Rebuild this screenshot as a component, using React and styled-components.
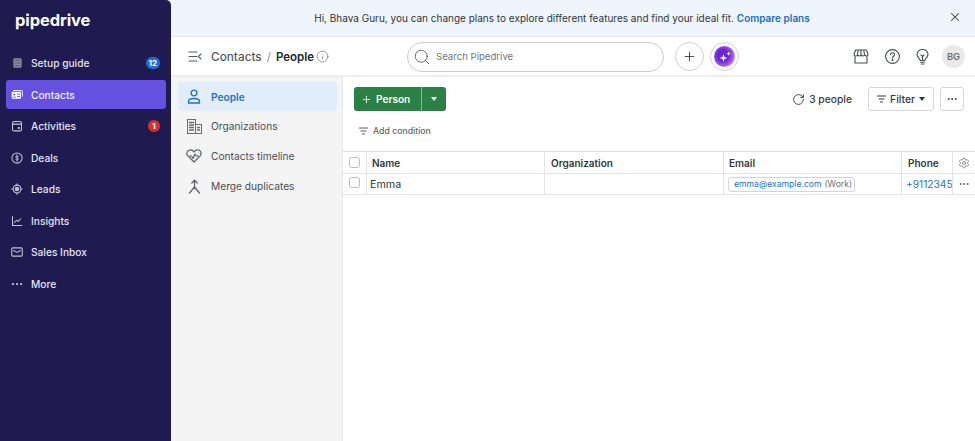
import React from 'react';
import styled, { createGlobalStyle } from 'styled-components';
import { X, Plus, Search, RotateCw, Settings, Ellipsis, Info } from 'lucide-react';

const Global = createGlobalStyle`
  html, body { margin: 0; padding: 0; height: 100%; background: #fff; overflow: hidden; }
  body { font-family: Inter, "Noto Sans", sans-serif; color: #2b2f36; }
  * { box-sizing: border-box; }
`;

const Page = styled.div`display: flex; width: 975px; height: 441px; overflow: hidden; background: #fff;`;
const Sidebar = styled.aside`
  width: 171px; flex: none; background: #1f1b50; border-top-right-radius: 5px;
  display: flex; flex-direction: column; padding: 0 5px 0 6px;
`;
const Logo = styled.div`
  height: 47.5px; padding: 5px 0 0 9px; color: #fff; font-size: 16.5px; font-weight: 700; letter-spacing: -0.1px; line-height: 30px;
`;
const SideItem = styled.div`
  height: ${p => p.$active ? 29 : 31.5}px; margin: ${p => p.$active ? '1.25px 0' : 0}; display: flex; align-items: center;
  padding-left: 5px; border-radius: 3px; font-size: 10.2px; font-weight: 500; color: ${p => p.$active ? '#f1f0fb' : '#e4e3f1'};
  background: ${p => p.$active ? '#6550e0' : 'transparent'};
`;
const SideIcon = styled.span`width: 12px; margin-right: 8px; display: flex; align-items: center; justify-content: center; color: #c4c3d8;`;
const SideBadge = styled.span`
  margin-left: auto; margin-right: 6px; height: 12px; min-width: 12px; padding: 0 3px; border-radius: 6px; background: ${p => p.$color};
  color: #fff; font-size: 8px; font-weight: 700; display: flex; align-items: center; justify-content: center;
`;
const Main = styled.div`flex: 1; min-width: 0; display: flex; flex-direction: column;`;
const Banner = styled.div`
  height: 37px; flex: none; background: #eff5fd; border-bottom: 1px solid #e3e6ea; display: flex; align-items: center; justify-content: center;
  font-size: 10px; color: #2f343b; position: relative; padding-right: 22px; padding-bottom: 1px;
`;
const BannerLink = styled.a`color: #1a6fc4; font-weight: 600; margin-left: 3px;`;
const BannerClose = styled.span`position: absolute; right: 13px; top: 10px; display: flex; color: #3b4047;`;
const TopBar = styled.header`height: 40px; flex: none; display: flex; align-items: center; border-bottom: 2px solid #eeeeef; padding-left: 17px; padding-top: 1px;`;
const Crumbs = styled.div`display: flex; align-items: center; margin-left: 9px; width: 196px; font-size: 11.8px; font-weight: 500; color: #565b63;`;
const Slash = styled.span`margin: 0 5px; color: #8b8f96; font-weight: 400;`;
const Current = styled.span`color: #22262c; font-size: 11.5px; font-weight: 600; margin-right: 2px;`;
const SearchBox = styled.div`
  width: 257px; height: 30px; border: 1px solid #c9ccd0; border-radius: 15px; display: flex; align-items: center; padding-left: 5px; gap: 5px;
  font-size: 9.6px; color: #71757c;
`;
const RoundBtn = styled.div`
  width: 29px; height: 29px; border-radius: 50%; border: 1px solid #d0d2d6; display: flex; align-items: center; justify-content: center;
  margin-left: ${p => p.$ml || 0}px; color: #33373d;
`;
const Ai = styled.div`
  width: 21px; height: 21px; border-radius: 50%; background: radial-gradient(circle at 42% 45%, #6a25d8 0 34%, #a55ad8 60%, #f3c1cc 86%, #fdf0ee 100%);
  display: flex; align-items: center; justify-content: center;
`;
const TopIcons = styled.div`margin-left: auto; display: flex; align-items: center; padding-right: 10px; color: #4a4e55;`;
const TopIcon = styled.span`display: flex; margin-right: ${p => p.$mr}px;`;
const Avatar = styled.div`width: 23px; height: 23px; border-radius: 50%; background: #e9e9ea; color: #6c7076; font-size: 9.4px; font-weight: 600; display: flex; align-items: center; justify-content: center;`;
const Body = styled.div`flex: 1; display: flex; min-height: 0;`;
const SubNav = styled.nav`width: 172px; flex: none; background: #f4f4f5; border-right: 1px solid #e4e4e6; padding: 5px 5px 0 7px;`;
const SubItem = styled.div`
  height: ${p => p.$first ? 29 : 30}px; display: flex; align-items: center; border-radius: 3px; font-size: 10.2px; padding-left: 7px;
  color: ${p => p.$active ? '#1f72c9' : '#494d54'}; font-weight: ${p => p.$active ? 600 : 400}; background: ${p => p.$active ? '#e1edfb' : 'transparent'};
`;
const SubIcon = styled.span`width: 18px; margin-right: 8px; display: flex; justify-content: center; color: ${p => p.$active ? '#1f72c9' : '#5c6066'};`;
const Content = styled.section`flex: 1; min-width: 0; display: flex; flex-direction: column;`;
const Toolbar = styled.div`height: 44px; flex: none; display: flex; align-items: center; padding: 0 11px;`;
const SplitButton = styled.div`display: flex; height: 24px; border-radius: 3px; overflow: hidden; background: #2a8045; color: #fff; font-size: 10.1px; font-weight: 600;`;
const AddPart = styled.div`width: 68px; display: flex; align-items: center; padding-left: 7px; gap: 4px; border-right: 1px solid #8ab79a;`;
const CaretPart = styled.div`width: 24px; display: flex; align-items: center; justify-content: center;`;
const Caret = styled.span`width: 0; height: 0; border-left: 3.5px solid transparent; border-right: 3.5px solid transparent; border-top: 4px solid ${p => p.$c || '#fff'};`;
const Count = styled.div`margin-left: auto; display: flex; align-items: center; gap: 4px; font-size: 10.3px; font-weight: 500; color: #3a3e45; margin-right: 16px;`;
const OutlineBtn = styled.div`
  height: 24px; border: 1px solid #d4d6d9; border-radius: 3px; display: flex; align-items: center; justify-content: center; font-size: 10.3px; font-weight: 500; color: #33373d;
  width: ${p => p.$w}px; margin-left: ${p => p.$ml || 0}px; gap: 4px;
`;
const Condition = styled.div`height: 20px; flex: none; display: flex; align-items: center; gap: 5px; padding-left: 16px; font-size: 8.7px; font-weight: 500; color: #62666d;`;
const Table = styled.div`position: relative; border-top: 1px solid #d9dadc; margin-top: 10px; font-size: 10px;`;
const Row = styled.div`display: grid; grid-template-columns: 24px 178px 179px 178px 51px; height: ${p => p.$h}px; border-bottom: 1px solid #e2e3e5;`;
const Cell = styled.div`
  display: flex; align-items: center; overflow: hidden; white-space: nowrap; border-right: 1px solid #e2e3e5;
  padding-left: ${p => p.$pl ?? 5}px; color: #33373d; font-weight: ${p => p.$head ? 600 : 400}; font-size: ${p => p.$fs || 10}px;
`;
const LastHead = styled(Cell)`border-right: 0;`;
const PhoneCell = styled(Cell)`border-right: 0; color: #1f72c9; font-size: 10.2px;`;
const Check = styled.span`width: 11px; height: 11px; border: 1px solid #b9bcc0; border-radius: 2.5px; background: #fff; display: block; margin-top: ${p => p.$mt || 0}px;`;
const EmailChip = styled.span`
  height: 15px; border: 1px solid #d3d5d8; border-radius: 3px; display: inline-flex; align-items: center; padding: 0 2px 0 5px; font-size: 8.6px; color: #1f72c9; gap: 3px;
`;
const ChipType = styled.span`color: #6b6f76;`;
const Floating = styled.div`
  position: absolute; right: 0; top: ${p => p.$top}px; width: 23px; height: ${p => p.$h}px; background: #fff; border-left: 1px solid #e2e3e5; border-bottom: 1px solid #e2e3e5;
  display: flex; align-items: center; justify-content: center; color: #55595f;
`;

const s = { width: 12, height: 12, viewBox: '0 0 16 16', fill: 'none', stroke: 'currentColor', strokeWidth: 1.4, strokeLinecap: 'round', strokeLinejoin: 'round' };
const SetupI = () => <svg {...s} width="11" height="14"><rect x="2" y="1" width="12" height="14" rx="2" fill="#8d8ba6" stroke="none"/><path d="M4.5 4h3M9 4h2.5M4.5 8h3M9 8h2.5M4.5 12h3M9 12h2.5" stroke="#4a4770" strokeWidth="1.3"/></svg>;
const ContactsI = () => <svg width="13" height="11" viewBox="0 0 18 15" fill="none" strokeLinecap="round"><path d="M4 1.5h12a1 1 0 0 1 1 1V10" stroke="#fff" strokeWidth="1.3"/><rect x="1" y="3.5" width="14" height="10.5" rx="1.5" fill="#fff"/><circle cx="5" cy="7.5" r="1.5" fill="#6550e0"/><path d="M2.8 12c.3-1.5 4-1.5 4.4 0M9.5 7h3.5M9.5 10.5h3.5" stroke="#6550e0" strokeWidth="1.3"/></svg>;
const ActivI = () => <svg {...s}><rect x="2" y="2" width="12" height="12.5" rx="2"/><path d="M2 5.5h12"/><rect x="9" y="9.5" width="3" height="2.3" fill="currentColor" stroke="none"/></svg>;
const DealI = () => <svg {...s}><circle cx="8" cy="8" r="6.8"/><path d="M10 5.8c-.5-.8-3.8-1.2-3.9.6-.1 1.9 3.9 1.1 3.9 3 0 1.8-3.4 1.5-4 .5M8 3.8v8.4" strokeWidth="1.1"/></svg>;
const LeadI = () => <svg {...s}><circle cx="8" cy="8" r="5.2"/><circle cx="8" cy="8" r="2.4" fill="currentColor"/><path d="M8 1v1.6M8 13.4V15M1 8h1.6M13.4 8H15"/></svg>;
const InsightI = () => <svg {...s}><path d="M2 2v12h12.5"/><path d="M4.5 10l3-3 2 1.5 3.5-3.5"/></svg>;
const InboxI = () => <svg {...s}><rect x="1" y="2.5" width="14" height="11" rx="1.5"/><path d="M3.5 6l4.5 2.5L12.5 6"/></svg>;
const DotsI = () => <svg {...s}><g fill="currentColor" stroke="none"><circle cx="2.5" cy="8" r="1.5"/><circle cx="8" cy="8" r="1.5"/><circle cx="13.5" cy="8" r="1.5"/></g></svg>;
const CollapseI = () => <svg width="14" height="11" viewBox="0 0 14 11" fill="none" stroke="#565b63" strokeWidth="1.1" strokeLinecap="round" strokeLinejoin="round"><path d="M1 1h8M1 5.5h8M1 10h8M13 3L10.5 5.5 13 8"/></svg>;
const PersonI = () => <svg width="14" height="15" viewBox="0 0 14 15" fill="none" stroke="currentColor" strokeWidth="1.4" strokeLinejoin="round"><circle cx="7" cy="4" r="2.9"/><path d="M1.5 14v-1.5C1.5 10.5 3.5 9.5 7 9.5s5.500 1 5.500 3V14z"/></svg>;
const OrgI = () => <svg width="15" height="15" viewBox="0 0 15 15" fill="none" stroke="#6a6e74" strokeWidth="1"><rect x=".5" y=".5" width="8" height="14"/><rect x="8.500" y="5.500" width="6" height="9"/><path d="M2 3.500h5M2 6h5M2 8.500h5M2 11h5M10 8.500h3M10 11h3" strokeWidth="1.3"/></svg>;
const HeartI = () => <svg width="16" height="14" viewBox="0 0 16 14" fill="none" stroke="#5c6066" strokeWidth="1.2" strokeLinejoin="round" strokeLinecap="round"><path d="M8 13L1.800 6.800C.2 5 .8 2.200 3 1.300 5 .5 7 1.500 8 3c1-1.500 3-2.500 5-1.700 2.200.9 2.800 3.700 1.200 5.500z"/><path d="M3.500 7h2l1.500 2.500L9 5l1.200 2h2.300"/></svg>;
const MergeI = () => <svg width="13" height="15" viewBox="0 0 13 15" fill="none" stroke="#5c6066" strokeWidth="1.2" strokeLinecap="round" strokeLinejoin="round"><path d="M3.800 4L6.500 1.200 9.200 4M6.500 1.200V8M1.500 14L6.500 8l5 6"/></svg>;
const FilterI = ({ c = '#55595f' }) => <svg width="9" height="8" viewBox="0 0 9 8" fill="none" stroke={c} strokeWidth="1.1" strokeLinecap="round"><path d="M.5 1h8M2 4h5M3.500 7h2"/></svg>;
const Spark = () => <svg width="12" height="12" viewBox="0 0 12 12" fill="#fff"><path d="M4.500 3l1 3 3 1-3 1-1 3-1-3-3-1 3-1zM9.500 .5l.6 1.600 1.600.6-1.600.6-.6 1.600-.6-1.600-1.600-.6 1.600-.6z"/></svg>;
const StoreI = () => <svg width="16" height="15" viewBox="0 0 16 15" fill="none" stroke="#4a4e55" strokeWidth="1.1" strokeLinejoin="round"><path d="M2.500 1h11L15 5.500c0 2-3 2-3.500 0 0 2-3 2-3.500 0 0 2-3 2-3.500 0 0 2-3.500 2-3.500 0z"/><path d="M5.200 1l-.7 4.500M8 1v4.500M10.800 1l.7 4.500M2 7.300V14h12V7.300"/></svg>;
const HelpI = () => <svg width="15" height="15" viewBox="0 0 15 15" fill="none" stroke="#4a4e55" strokeWidth="1.1" strokeLinecap="round"><circle cx="7.500" cy="7.500" r="6.900"/><path d="M5.500 5.800c0-2.600 4.100-2.600 4.100-.2 0 1.700-2.100 1.700-2.100 3.400"/><circle cx="7.500" cy="11" r=".5" fill="#4a4e55"/></svg>;
const BulbI = () => <svg width="13" height="16" viewBox="0 0 13 16" fill="none" stroke="#4a4e55" strokeWidth="1.1" strokeLinecap="round" strokeLinejoin="round"><path d="M4.200 11.500C4 9.500 1 8.500 1 5.500a5.500 5 0 0 1 11 0c0 3-3 4-3.200 6z"/><path d="M4.500 13.200h4M5.200 15h2.600M5 6l1.500 1.500L8 6M6.500 7.500v4"/></svg>;

const sideItems = [
  ['Setup guide', SetupI, '12', '#1f6fd6'], ['Contacts', ContactsI], ['Activities', ActivI, '1', '#d9302f'], ['Deals', DealI],
  ['Leads', LeadI], ['Insights', InsightI], ['Sales Inbox', InboxI], ['More', DotsI],
];

export default function App() {
  return (
    <Page>
      <Global />
      <Sidebar>
        <Logo>pipedrive</Logo>
        {sideItems.map(([label, Icon, badge, color]) => (
          <SideItem key={label} $active={label === 'Contacts'}>
            <SideIcon><Icon /></SideIcon>{label}
            {badge && <SideBadge $color={color}>{badge}</SideBadge>}
          </SideItem>
        ))}
      </Sidebar>
      <Main>
        <Banner>
          Hi, Bhava Guru, you can change plans to explore different features and find your ideal fit.
          <BannerLink>Compare plans</BannerLink>
          <BannerClose><X size={14} strokeWidth={1.8} /></BannerClose>
        </Banner>
        <TopBar>
          <CollapseI />
          <Crumbs>Contacts<Slash>/</Slash><Current>People</Current><Info size={13} strokeWidth={1.1} /></Crumbs>
          <SearchBox><Search size={18} strokeWidth={1.1} color="#4a4e55" />Search Pipedrive</SearchBox>
          <RoundBtn $ml={11}><Plus size={15} strokeWidth={1.4} /></RoundBtn>
          <RoundBtn $ml={6}><Ai><Spark /></Ai></RoundBtn>
          <TopIcons>
            <TopIcon $mr={16}><StoreI /></TopIcon>
            <TopIcon $mr={16}><HelpI /></TopIcon>
            <TopIcon $mr={13}><BulbI /></TopIcon>
            <Avatar>BG</Avatar>
          </TopIcons>
        </TopBar>
        <Body>
          <SubNav>
            <SubItem $active $first><SubIcon $active><PersonI /></SubIcon>People</SubItem>
            <SubItem><SubIcon><OrgI /></SubIcon>Organizations</SubItem>
            <SubItem><SubIcon><HeartI /></SubIcon>Contacts timeline</SubItem>
            <SubItem><SubIcon><MergeI /></SubIcon>Merge duplicates</SubItem>
          </SubNav>
          <Content>
            <Toolbar>
              <SplitButton>
                <AddPart><Plus size={11} strokeWidth={1.8} />Person</AddPart>
                <CaretPart><Caret /></CaretPart>
              </SplitButton>
              <Count><RotateCw size={13} strokeWidth={1.6} color="#2b2f36" />3 people</Count>
              <OutlineBtn $w={66}><FilterI c="#33373d" />Filter<Caret $c="#33373d" /></OutlineBtn>
              <OutlineBtn $w={24} $ml={6}><Ellipsis size={12} strokeWidth={2} /></OutlineBtn>
            </Toolbar>
            <Condition><FilterI />Add condition</Condition>
            <Table>
              <Row $h={22}>
                <Cell $pl={6}><Check /></Cell>
                <Cell $head>Name</Cell>
                <Cell $head $pl={6}>Organization</Cell>
                <Cell $head>Email</Cell>
                <LastHead $head $pl={6}>Phone</LastHead>
              </Row>
              <Row $h={21}>
                <Cell $pl={6}><Check $mt={-3} /></Cell>
                <Cell $pl={3} $fs={10.7}>Emma</Cell>
                <Cell />
                <Cell $pl={4}><EmailChip>emma@example.com<ChipType>(Work)</ChipType></EmailChip></Cell>
                <PhoneCell $pl={4}>+9112345</PhoneCell>
              </Row>
              <Floating $top={0} $h={22}><Settings size={12} strokeWidth={1.3} /></Floating>
              <Floating $top={22} $h={21}><Ellipsis size={12} strokeWidth={2} /></Floating>
            </Table>
          </Content>
        </Body>
      </Main>
    </Page>
  );
}
